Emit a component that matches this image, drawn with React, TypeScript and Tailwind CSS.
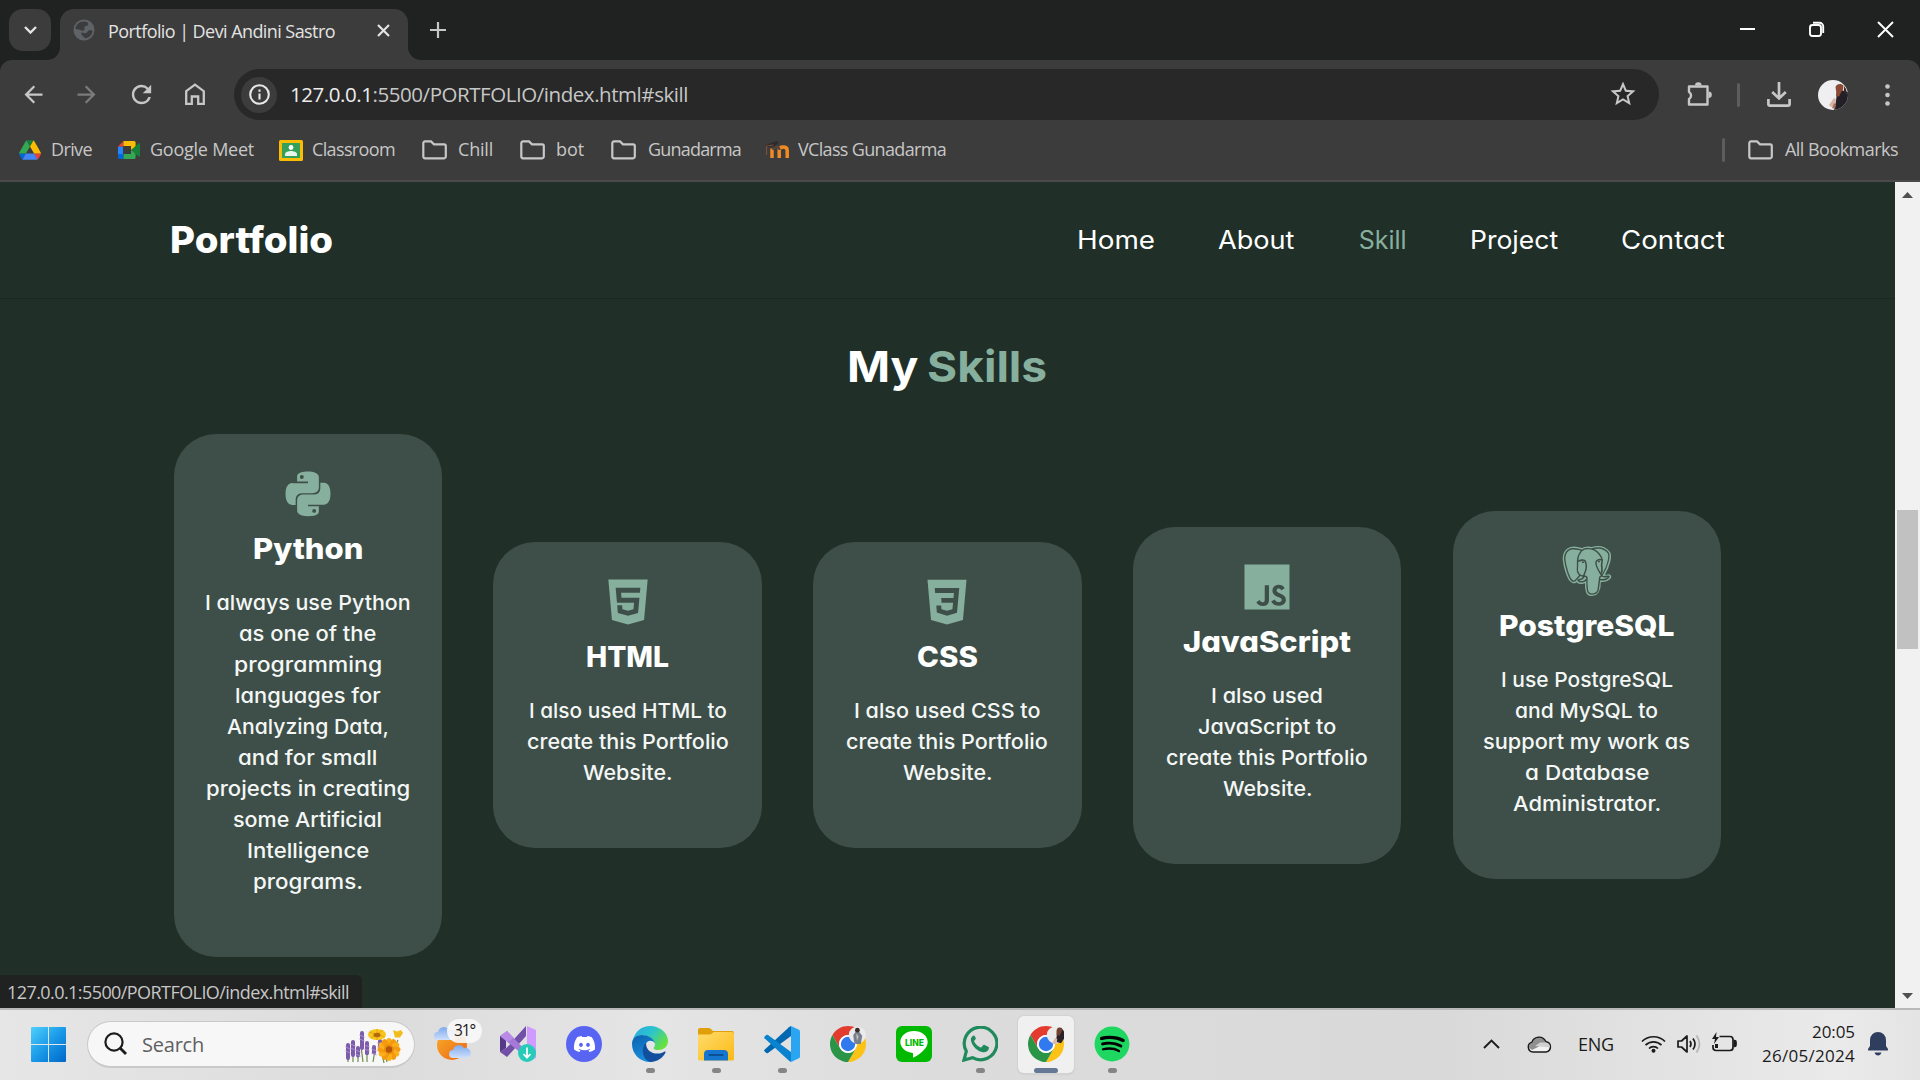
import { useLayoutEffect, useRef, useState } from "react";
import type { ReactNode } from "react";
import { MdArrowBack, MdArrowForward, MdRefresh, MdStarBorder } from "react-icons/md";
import { BiLogoPython, BiLogoHtml5, BiLogoCss3, BiLogoJavascript, BiLogoPostgresql } from "react-icons/bi";
import { FaDiscord, FaSpotify } from "react-icons/fa";

/** One line of text whose letter spacing is adjusted so that it spans `w` pixels. */
function Fit({ w, children, className = "" }: { w: number; children: ReactNode; className?: string }) {
  const ref = useRef<HTMLSpanElement>(null);
  const [spacing, setSpacing] = useState(0);
  useLayoutEffect(() => {
    const el = ref.current;
    if (!el) return;
    const count = (el.textContent ?? "").length;
    setSpacing((w - el.getBoundingClientRect().width) / Math.max(1, count));
  }, [w]);
  return (
    <span className={`block shrink-0 whitespace-nowrap ${className}`} style={{ width: w }}>
      <span ref={ref} style={{ letterSpacing: spacing }}>
        {children}
      </span>
    </span>
  );
}

/** One line of text whose glyphs are widened so that it spans `w` pixels. */
function Wide({ w, children, className = "" }: { w: number; children: ReactNode; className?: string }) {
  const ref = useRef<HTMLSpanElement>(null);
  const [scale, setScale] = useState(1);
  useLayoutEffect(() => {
    if (ref.current) setScale(w / ref.current.offsetWidth);
  }, [w]);
  return (
    <span className={`block shrink-0 whitespace-nowrap ${className}`} style={{ width: w }}>
      <span ref={ref} className="inline-block origin-left" style={{ transform: `scaleX(${scale})` }}>
        {children}
      </span>
    </span>
  );
}

function FolderOutline() {
  return (
    <svg className="h-[20px] w-[25px]" viewBox="0 0 25 20" fill="none" stroke="#c7c7c7" strokeWidth="2.2">
      <path d="M1.3 3.2a1.7 1.7 0 0 1 1.7-1.8h6l3 3h10.2a1.6 1.6 0 0 1 1.6 1.6v10.6a1.7 1.7 0 0 1-1.7 1.7H3a1.7 1.7 0 0 1-1.7-1.7z" />
    </svg>
  );
}

function DriveIcon() {
  return (
    <svg className="h-[20px] w-[22px]" viewBox="0 0 87.3 78">
      <path d="m6.6 66.85 3.85 6.65c.8 1.4 1.95 2.5 3.3 3.3l13.75-23.8h-27.5c0 1.55.4 3.1 1.2 4.5z" fill="#0066da" />
      <path d="m43.65 25-13.75-23.8c-1.35.8-2.5 1.9-3.3 3.3l-25.4 44a9.06 9.06 0 0 0-1.2 4.5h27.5z" fill="#34a853" />
      <path d="m73.55 76.8c1.35-.8 2.5-1.9 3.3-3.3l1.6-2.75 7.65-13.25c.8-1.4 1.2-2.95 1.2-4.5h-27.5l5.85 11.5z" fill="#ea4335" />
      <path d="m43.65 25 13.75-23.8c-1.35-.8-2.9-1.2-4.5-1.2h-18.5c-1.6 0-3.15.45-4.5 1.2z" fill="#188038" />
      <path d="m59.8 53h-32.3l-13.75 23.8c1.35.8 2.9 1.2 4.5 1.2h50.8c1.6 0 3.15-.45 4.5-1.2z" fill="#4285f4" />
      <path d="m73.4 26.5-12.7-22c-.8-1.4-1.95-2.5-3.3-3.3l-13.75 23.8 16.15 28h27.45c0-1.55-.4-3.1-1.2-4.5z" fill="#fbbc04" />
    </svg>
  );
}

function MeetIcon() {
  return (
    <svg className="h-[18px] w-[22px]" viewBox="0 0 22 18">
      <path d="M0 5.5h5V13H0z" fill="#2684fc" />
      <path d="M0 5.5 5.5 0v5.5z" fill="#ea4335" />
      <path d="M5.5 0H16a1.6 1.6 0 0 1 1.6 1.6V7L13 9V5H5.5z" fill="#fbbc04" />
      <path d="M0 13h5.5v5H1.6A1.6 1.6 0 0 1 0 16.4z" fill="#0066da" />
      <path d="M5.5 13H13V9l4.600 2v5.400A1.600 1.600 0 0 1 16 18H5.500z" fill="#34a853" />
      <path d="M13 9l7.500-6.400c.6-.5 1.500-.2 1.500.6v11.600c0 .8-.9 1.100-1.500.6z" fill="#188038" />
    </svg>
  );
}

function ClassroomIcon() {
  return (
    <svg className="h-[21px] w-[24px]" viewBox="0 0 24 21">
      <rect width="24" height="21" rx="1.5" fill="#fbbc04" />
      <rect x="3" y="3" width="18" height="15" fill="#34a05a" />
      <circle cx="12" cy="7.500" r="2.400" fill="#fff" />
      <path d="M6 16v-1.800c0-2 3.500-3.200 6-3.200s6 1.200 6 3.200V16z" fill="#e8f5ec" />
    </svg>
  );
}

function MoodleIcon() {
  return (
    <svg className="h-[18px] w-[24px]" viewBox="0 0 24 18" fill="none">
      <path d="M7 17V7.500M14.200 17V9.300Q14.200 6 18.200 6T22.200 9.300V17" stroke="#f08a24" strokeWidth="3.500" />
      <path d="M8 9q1-3 4-3 2.500 0 2.500 3" stroke="#5a4436" strokeWidth="2.200" />
      <path d="M0 4.500 6 2 12 0l1.500 2L9 5.500 3 6z" fill="#2f2a28" />
      <path d="M1.500 5v9M1.500 5l7-1" stroke="#75523d" strokeWidth="1.200" />
    </svg>
  );
}

const bookmarks: { label: string; w: number; icon: ReactNode; item: string; gap: string }[] = [
  { label: "Drive", w: 41, icon: <DriveIcon />, item: "ml-[19px]", gap: "ml-[10px]" },
  { label: "Google Meet", w: 104, icon: <MeetIcon />, item: "ml-[26px]", gap: "ml-[10px]" },
  { label: "Classroom", w: 83, icon: <ClassroomIcon />, item: "ml-[25px]", gap: "ml-[9px]" },
  { label: "Chill", w: 35, icon: <FolderOutline />, item: "ml-[27px]", gap: "ml-[11px]" },
  { label: "bot", w: 28, icon: <FolderOutline />, item: "ml-[27px]", gap: "ml-[11px]" },
  { label: "Gunadarma", w: 93, icon: <FolderOutline />, item: "ml-[27px]", gap: "ml-[12px]" },
  { label: "VClass Gunadarma", w: 148, icon: <MoodleIcon />, item: "ml-[24px]", gap: "ml-[9px]" },
];

function Avatar({ className }: { className: string }) {
  return (
    <svg className={className} viewBox="0 0 30 30">
      <clipPath id="avatarClip">
        <circle cx="15" cy="15" r="15" />
      </clipPath>
      <g clipPath="url(#avatarClip)">
        <rect width="30" height="30" fill="#efeff1" />
        <path d="M19 13l4-3 7 2v18H16l2-9z" fill="#221f26" />
        <path d="M17.500 7c1-3.500 6-4 8-1.500l-.5 4-2 3-2 4-3 0 .2-5z" fill="#8a4a35" />
        <path d="M11 25l5-7 2 1-1 6-4 2z" fill="#d9b3a2" />
        <path d="M14 28l2-5 2 2-1 4z" fill="#a8705c" />
        <path d="M26 6l2 3 1 5-1 1-2-4z" fill="#3b2522" />
      </g>
    </svg>
  );
}

function TabStrip() {
  return (
    <div className="flex h-[60px] items-start bg-[#202221]">
      <div className="mt-[9px] ml-[9px] flex h-[42px] w-[42px] items-center justify-center rounded-[14px] bg-[#3c3c3c]">
        <svg className="h-[8px] w-[13px]" viewBox="0 0 13 8" fill="none" stroke="#e3e3e3" strokeWidth="2.400">
          <path d="M1 1l5.500 5.500L12 1" />
        </svg>
      </div>
      <div className="mt-[9px] ml-[-4px] flex h-[51px] items-end">
        <svg className="h-[13px] w-[13px]" viewBox="0 0 13 13">
          <path d="M13 0v13H0A13 13 0 0 0 13 0z" fill="#3c3c3c" />
        </svg>
        <div className="flex h-[51px] w-[348px] items-center rounded-t-[14px] bg-[#3c3c3c] pb-[9px]">
          <svg className="ml-[13px] h-[22px] w-[22px]" viewBox="0 0 22 22">
            <circle cx="11" cy="11" r="10.500" fill="#5f6368" />
            <path d="M11 2.500c3 0 5 1.500 4 3.500-1 1.500-3 .5-3.500 2s1 2.500-1 3.500c-1.500.8-3-.5-5-1l-3-.5C2.500 6 6 2.500 11 2.500zM8 13.500c2 0 3 1 5 .5 1.500-.4 1.500-2.500 4-3l2.500.8c0 3.500-3 7.200-7.500 7.700-.5-2-3.500-2-4-6z" fill="#3c3c3c" />
          </svg>
          <Fit w={227} className="mt-[1px] ml-[13px] text-[18px] leading-[28px] text-[#e3e3e3]">
            Portfolio | Devi Andini Sastro
          </Fit>
          <svg className="ml-[42px] h-[13px] w-[13px]" viewBox="0 0 13 13" stroke="#e3e3e3" strokeWidth="2.200">
            <path d="M1 1l11 11M12 1L1 12" />
          </svg>
        </div>
        <svg className="h-[13px] w-[13px]" viewBox="0 0 13 13">
          <path d="M0 0v13h13A13 13 0 0 1 0 0z" fill="#3c3c3c" />
        </svg>
      </div>
      <svg className="mt-[22px] ml-[9px] h-[16px] w-[16px]" viewBox="0 0 16 16" stroke="#c7c7c7" strokeWidth="2.200">
        <path d="M8 0v16M0 8h16" />
      </svg>
      <div className="mt-[21px] mr-[26px] ml-auto flex items-center gap-[52px] text-white">
        <svg className="h-[17px] w-[17px]" viewBox="0 0 17 17" stroke="currentColor" strokeWidth="2">
          <path d="M1 8h15" />
        </svg>
        <svg className="h-[17px] w-[17px]" viewBox="0 0 17 17" fill="none" stroke="currentColor" strokeWidth="1.900">
          <rect x="2" y="4" width="11" height="11" rx="2.500" />
          <path d="M5 1.800h6.500a3.700 3.700 0 0 1 3.700 3.700V12" />
        </svg>
        <svg className="h-[17px] w-[17px]" viewBox="0 0 17 17" stroke="currentColor" strokeWidth="1.900">
          <path d="M1 1l15 15M16 1L1 16" />
        </svg>
      </div>
    </div>
  );
}

function Toolbar() {
  return (
    <div className="bg-[#202221]">
      <div className="flex h-[69px] items-center rounded-t-[12px] bg-[#3c3c3c] text-[#c7c7c7]">
        <MdArrowBack className="ml-[20px] h-[27px] w-[27px] shrink-0" />
        <MdArrowForward className="ml-[26px] h-[27px] w-[27px] shrink-0 text-[#7b7b7b]" />
        <MdRefresh className="ml-[27px] h-[29px] w-[29px] shrink-0" />
        <svg className="mb-[2px] ml-[29px] h-[22px] w-[20px] shrink-0" viewBox="0 0 20 22" fill="none" stroke="currentColor" strokeWidth="2.300">
          <path d="M1.200 8.200 10 1.600l8.800 6.600v12.600h-5.600v-7.300H6.800v7.300H1.200z" />
        </svg>
        <div className="ml-[29px] flex h-[51px] w-[1425px] items-center rounded-full bg-[#282828]">
          <div className="ml-[7px] flex h-[36px] w-[36px] items-center justify-center rounded-full bg-[#3c3c3c]">
            <svg className="h-[21px] w-[21px]" viewBox="0 0 21 21" fill="none" stroke="#e8e8e8" strokeWidth="2.100">
              <circle cx="10.500" cy="10.500" r="9.300" />
              <path d="M10.500 9.500v6M10.500 5.500v2.200" />
            </svg>
          </div>
          <Fit w={398} className="mb-[2px] ml-[13px] text-[20.500px] leading-[30px]">
            <span className="text-[#ececec]">127.0.0.1</span>:5500/PORTFOLIO/index.html#skill
          </Fit>
          <MdStarBorder className="mr-[21px] mb-[2px] ml-auto h-[30px] w-[30px]" />
        </div>
        <svg className="mb-[2px] ml-[27px] h-[26px] w-[26px] shrink-0" viewBox="0 0 26 26">
          <path d="M3 5.500h18.500v18H3v-5.500a4 4 0 0 0 0-7z" fill="none" stroke="currentColor" strokeWidth="2.400" strokeLinejoin="round" />
          <path d="M9 4.500a3.300 3.300 0 0 1 6.600 0zM22.500 10.500a3.300 3.300 0 0 1 0 6.600z" fill="currentColor" />
        </svg>
        <div className="ml-[25px] h-[24px] w-[3px] rounded-full bg-[#5d5d5d]" />
        <svg className="ml-[27px] h-[25px] w-[24px] shrink-0" viewBox="0 0 24 25" fill="none" stroke="currentColor" strokeWidth="2.700">
          <path d="M12 0v16M5.200 10l6.800 6.500 6.800-6.500M1.400 17v5.500q0 1.100 1.100 1.100h19q1.100 0 1.100-1.100V17" />
        </svg>
        <Avatar className="ml-[27px] h-[30px] w-[30px] shrink-0" />
        <svg className="ml-[37px] h-[22px] w-[5px] shrink-0" viewBox="0 0 5 22" fill="currentColor">
          <circle cx="2.500" cy="2.500" r="2.300" />
          <circle cx="2.500" cy="11" r="2.300" />
          <circle cx="2.500" cy="19.500" r="2.300" />
        </svg>
      </div>
    </div>
  );
}

function BookmarksBar() {
  return (
    <div className="flex h-[53px] items-center border-b-2 border-[#4a4a4a] bg-[#3c3c3c] pb-[9px] text-[18px] text-[#c7c7c7]">
      {bookmarks.map((b) => (
        <div key={b.label} className={`flex items-center ${b.item}`}>
          {b.icon}
          <Fit w={b.w} className={`mb-[2px] leading-[28px] ${b.gap}`}>
            {b.label}
          </Fit>
        </div>
      ))}
      <div className="ml-auto h-[24px] w-[3px] rounded-full bg-[#5d5d5d]" />
      <div className="mr-[22px] ml-[23px] flex items-center">
        <FolderOutline />
        <Fit w={113} className="mb-[2px] ml-[12px] leading-[28px]">
          All Bookmarks
        </Fit>
      </div>
    </div>
  );
}

const navLinks = [
  { label: "Home", w: 78, color: "text-white" },
  { label: "About", w: 77, color: "text-white" },
  { label: "Skill", w: 48, color: "text-[#87af9d]" },
  { label: "Project", w: 88, color: "text-white" },
  { label: "Contact", w: 104, color: "text-white" },
];

type Line = [text: string, width: number];

const skills: { title: string; w: number; icon: ReactNode; lines: Line[] }[] = [
  {
    title: "Python",
    w: 110,
    icon: <BiLogoPython className="h-[60px] w-[60px]" />,
    lines: [
      ["I always use Python", 206],
      ["as one of the", 137],
      ["programming", 148],
      ["languages for", 146],
      ["Analyzing Data,", 162],
      ["and for small", 139],
      ["projects in creating", 204],
      ["some Artificial", 149],
      ["Intelligence", 122],
      ["programs.", 110],
    ],
  },
  {
    title: "HTML",
    w: 83,
    icon: <BiLogoHtml5 className="h-[60px] w-[60px]" />,
    lines: [
      ["I also used HTML to", 198],
      ["create this Portfolio", 202],
      ["Website.", 89],
    ],
  },
  {
    title: "CSS",
    w: 61,
    icon: <BiLogoCss3 className="h-[60px] w-[60px]" />,
    lines: [
      ["I also used CSS to", 186],
      ["create this Portfolio", 202],
      ["Website.", 89],
    ],
  },
  {
    title: "JavaScript",
    w: 168,
    icon: <BiLogoJavascript className="h-[60px] w-[60px]" />,
    lines: [
      ["I also used", 112],
      ["JavaScript to", 138],
      ["create this Portfolio", 202],
      ["Website.", 89],
    ],
  },
  {
    title: "PostgreSQL",
    w: 176,
    icon: <BiLogoPostgresql className="h-[60px] w-[60px]" />,
    lines: [
      ["I use PostgreSQL", 172],
      ["and MySQL to", 143],
      ["support my work as", 207],
      ["a Database", 124],
      ["Administrator.", 148],
    ],
  },
];

function PortfolioPage() {
  return (
    <main className="flex-1 bg-[#202f28] font-['Inter',sans-serif] [font-feature-settings:'cv11']">
      <header className="flex h-[117px] items-center justify-between border-b border-[#1b2822] pr-[170px] pl-[170px]">
        <Wide w={163} className="text-[37px] leading-[48px] font-extrabold text-white">
          Portfolio
        </Wide>
        <nav className="flex gap-[63.200px] text-[25px] leading-[36px]">
          {navLinks.map((n) => (
            <Wide key={n.label} w={n.w} className={n.color}>
              {n.label}
            </Wide>
          ))}
        </nav>
      </header>
      <h2 className="mt-[37px] mr-[2px] flex justify-center gap-[9px] text-[43px] leading-[60px] font-bold text-white">
        <Wide w={71}>My</Wide>
        <Wide w={120} className="text-[#87af9d]">
          Skills
        </Wide>
      </h2>
      <section className="mt-[37.600px] flex items-center gap-[51.300px] pl-[173.800px]">
        {skills.map((s) => (
          <article key={s.title} className="flex w-[268.400px] flex-col items-center rounded-[42px] bg-[#3d4f48] pt-[30px] pb-[60px]">
            <div className="text-[#87af9d]">{s.icon}</div>
            <Wide w={s.w} className="mt-[3px] text-[29px] leading-[44px] font-extrabold text-white">
              {s.title}
            </Wide>
            <div className="mt-[16px] flex flex-col items-center text-[20.500px] leading-[31px] font-[450] text-[#f4f7f5]">
              {s.lines.map(([text, w]) => (
                <Wide key={text} w={w}>
                  {text}
                </Wide>
              ))}
            </div>
          </article>
        ))}
      </section>
    </main>
  );
}

function Scrollbar() {
  return (
    <div className="flex w-[25px] flex-col items-center bg-[#f1f1f1]">
      <svg className="mt-[10px] h-[6px] w-[11px]" viewBox="0 0 11 6">
        <path d="M5.500 0L11 6H0z" fill="#505050" />
      </svg>
      <div className="mt-[312px] h-[139px] w-[21px] bg-[#c1c1c1]" />
      <svg className="mt-auto mb-[9px] h-[6px] w-[11px]" viewBox="0 0 11 6">
        <path d="M5.500 6L11 0H0z" fill="#505050" />
      </svg>
    </div>
  );
}

function WindowsLogo() {
  return (
    <svg className="h-[35px] w-[35px]" viewBox="0 0 35 35">
      <linearGradient id="win" x1="0" y1="0" x2="1" y2="1" gradientUnits="objectBoundingBox">
        <stop offset="0" stopColor="#4fd0fc" />
        <stop offset=".5" stopColor="#1a9ae8" />
        <stop offset="1" stopColor="#0067c9" />
      </linearGradient>
      <path d="M1 0h16v17H0V1q0-1 1-1zM18 0h16q1 0 1 1v16H18zM0 18h17v17H1q-1 0-1-1zM18 18h17v16q0 1-1 1H18z" fill="url(#win)" />
    </svg>
  );
}

const petals = [0, 30, 60, 90, 120, 150, 180, 210, 240, 270, 300, 330];
const lavender = [
  [3, 15, 18],
  [8, 12, 18],
  [13, 18, 12],
  [17, 3, 20],
  [22, 13, 15],
  [29, 17, 10],
  [35, 11, 9],
];

function Flowers() {
  return (
    <svg className="h-[35px] w-[59px]" viewBox="0 0 59 35">
      <g stroke="#6f8a4a" strokeWidth="1.200" fill="none">
        <path d="M3 34V24M8 34V22M13 34V26M18 34L16 18M22 34V22M28 34l2-12M39 35l-3-14M42 34l-2-9M45 30l8-18" />
      </g>
      {lavender.map(([x, y, h]) => (
        <g key={x}>
          <rect x={x - 2} y={y} width="4" height={h * 0.95} rx="2" fill="#7d5cab" />
          <path d={`M${x - 2.500} ${y + 4}l5 2M${x - 2.500} ${y + 8}l5 2`} stroke="#a98bcf" strokeWidth="1" />
        </g>
      ))}
      <ellipse cx="32" cy="6.500" rx="9" ry="5.500" fill="#f7c51d" />
      <path d="M24 4l16 5M26 10l12-8M32 1v11" stroke="#e0a20e" strokeWidth=".8" />
      <ellipse cx="32" cy="7" rx="3.500" ry="2.200" fill="#b5680e" />
      <path d="M48 2l4 1.500L56 2l2 3-3 4.500h-5z" fill="#f2bd1b" />
      {petals.map((a) => (
        <ellipse key={a} cx="44" cy="14.500" rx="3" ry="4.500" fill={a % 60 ? "#f49a0e" : "#fbb01a"} transform={`rotate(${a} 44 21.500)`} />
      ))}
      <circle cx="44" cy="21.500" r="5" fill="#ee8f0c" />
      <circle cx="44" cy="21.500" r="3.200" fill="#b5560c" />
    </svg>
  );
}

function Weather() {
  return (
    <div className="relative h-[44px] w-[48px]">
      <svg className="h-[44px] w-[48px]" viewBox="0 0 48 44">
        <linearGradient id="sun" x1="0" y1="0" x2="1" y2="1">
          <stop offset="0" stopColor="#f6b02c" />
          <stop offset="1" stopColor="#ef6410" />
        </linearGradient>
        <linearGradient id="cloud" x1="0" y1="0" x2="0" y2="1">
          <stop offset="0" stopColor="#7fa9ee" />
          <stop offset="1" stopColor="#cfe0fb" />
        </linearGradient>
        <circle cx="18" cy="26" r="15" fill="url(#sun)" />
        <path d="M4 21a4 4 0 0 1 0-8 6 6 0 0 1 11-2 5 5 0 0 1 4 10z" fill="url(#cloud)" />
        <path d="M19 39a4 4 0 0 1 0-8 6 6 0 0 1 11-2 5 5 0 0 1 3 10z" fill="url(#cloud)" />
      </svg>
      <div className="absolute top-0 left-[13px] flex h-[24px] w-[35px] items-center justify-center rounded-full bg-[#f8f8f8]/90 text-[15.500px] text-[#1c1c1c]">
        <Fit w={21} className="mb-[1px] leading-[24px]">
          31°
        </Fit>
      </div>
    </div>
  );
}

function VisualStudio() {
  return (
    <svg className="h-[36px] w-[36px]" viewBox="0 0 36 36">
      <path d="M6 22l20-22v10L7 31l-7-5z" fill="#7350a8" />
      <path d="M0 10l7-5 20 21v6z" fill="#a678d8" />
      <path d="M0 10l7-5 7 7-7 4-1-1z" fill="#b98be6" />
      <path d="M0 10v16l6-4v-7z" fill="#57398a" />
      <path d="M6 15v7l4-3.500z" fill="#dfdfdf" />
      <path d="M27 0l9 4v28l-9 4z" fill="#cf9bff" />
      <circle cx="27" cy="27" r="9" fill="#27ccb8" />
      <path d="M27 21.500v10M23.500 28l3.500 3.700 3.500-3.700" stroke="#fff" strokeWidth="1.700" fill="none" />
    </svg>
  );
}

function Discord() {
  return (
    <div className="flex h-[36px] w-[36px] items-center justify-center rounded-full bg-[#5865f2]">
      <FaDiscord className="h-[24px] w-[23px] text-white" />
    </div>
  );
}

function Edge() {
  return (
    <svg className="h-[36px] w-[36px]" viewBox="0 0 36 36">
      <linearGradient id="edgeTop" x1="0" y1="0" x2="1" y2=".6">
        <stop offset="0" stopColor="#29a7e0" />
        <stop offset=".5" stopColor="#2bc3cf" />
        <stop offset="1" stopColor="#66e13f" />
      </linearGradient>
      <linearGradient id="edgeLeft" x1="0" y1="0" x2=".4" y2="1">
        <stop offset="0" stopColor="#0b62ad" />
        <stop offset="1" stopColor="#1a8ee0" />
      </linearGradient>
      <path d="M.5 15C3 5 10 0 18 0c10 0 18 7 18 15 0 6-5 9-9.500 9-4.500 0-5.500-1.500-4.500-2.700 1-1.300 1.300-2.800.5-4.800C20.500 11.500 15 9.300 9.500 9.300 5 9.300 2 12 .5 15z" fill="url(#edgeTop)" />
      <path d="M0 18c0-5.500 4-9 9.500-9 6.500 0 12 3 13.300 8-2.800-3.500-8.800-3-9.300 3-.5 9 7.500 13 13.500 11.500C24 35 20 36 18 36 8 36 0 28 0 18z" fill="url(#edgeLeft)" />
      <path d="M14 17c-5 4-4.500 16 4 19 7 0 13-4 15.500-9.500.5-1-.5-1.200-1.200-.8C25 30 14 27 14 17z" fill="#124f9c" />
    </svg>
  );
}

function Explorer() {
  return (
    <svg className="h-[36px] w-[36px]" viewBox="0 0 36 36">
      <linearGradient id="folderFace" x1="0" y1="0" x2="1" y2="1">
        <stop offset="0" stopColor="#ffdc6e" />
        <stop offset="1" stopColor="#fbb914" />
      </linearGradient>
      <path d="M0 4q0-2 2-2h9q1.500 0 2.500 1.500L15 5h19q2 0 2 2v5H0z" fill="#dfa00b" />
      <path d="M0 8.500h11q2 0 3.200-1.300T17 6h17q2 0 2 2v25q0 1.500-1.500 1.500h-33Q0 34.500 0 33z" fill="url(#folderFace)" />
      <path d="M6 34.500V28q0-4 4-4h16q4 0 4 4v6.500z" fill="#1476cf" />
      <path d="M11.500 29h13" stroke="#0b4f94" strokeWidth="2" strokeLinecap="round" />
    </svg>
  );
}

function VsCode() {
  return (
    <svg className="h-[36px] w-[36px]" viewBox="0 0 36 36">
      <path d="M27 0v10L4 27q-1 .5-1.700 0L.5 25.300q-.7-.8 0-1.500L25 1.200z" fill="#0068b0" />
      <path d="M27 36V26L4 9q-1-.5-1.700 0L.5 10.700q-.7.800 0 1.500L25 34.800z" fill="#0a83cf" />
      <path d="M27 0l8 3.700q1 .5 1 1.700v25.200q0 1.200-1 1.700L27 36z" fill="#29a5f2" />
    </svg>
  );
}

function Chrome({ active }: { active?: boolean }) {
  return (
    <svg className="h-[36px] w-[36px]" viewBox="-24 -24 48 48">
      <path d="M-20.780-12A24 24 0 0 1 20.780-12L0-12A12 12 0 0 0-10.390 6z" fill="#e33b2e" />
      <path d="M20.780-12A24 24 0 0 1 0 24L10.390 6A12 12 0 0 0 0-12z" fill="#fcc215" />
      <path d="M0 24A24 24 0 0 1-20.780-12L-10.390 6A12 12 0 0 0 10.390 6z" fill="#2a9447" />
      <circle r="12" fill="#fff" />
      <circle r="9.600" fill="#3179ee" />
      <circle cx="12.500" cy="-12" r="11.500" fill="#ebebeb" />
      {active ? (
        <>
          <path d="M13-3l2-12 5-7 4 5v10l-4 6z" fill="#29222a" />
          <path d="M14-16q0-7 5-6l3 3-4 8-4-1z" fill="#754030" />
          <path d="M8-1l4-7 3 1-1 8z" fill="#dcb9aa" />
        </>
      ) : (
        <>
          <path d="M8-3l-1-9 3-4h5l4 5-2 11h-7z" fill="#77808f" />
          <circle cx="12.500" cy="-18.500" r="3.200" fill="#3a2c2b" />
          <path d="M11-14l3 4-2 6z" fill="#d8c2b4" />
        </>
      )}
    </svg>
  );
}

function LineApp() {
  return (
    <div className="relative h-[36px] w-[36px] overflow-hidden rounded-[6px] bg-[#00b900]">
      <svg className="h-[36px] w-[36px]" viewBox="0 0 36 36">
        <path d="M18 5C10.400 5 4.300 9.900 4.300 16c0 5.400 5 10 11.500 10.800 1.500.3 1.500 1 1.200 4.200 0 .6.500.7 1.200.3C24 28 31.700 22.500 31.700 16 31.700 9.900 25.600 5 18 5z" fill="#fff" />
      </svg>
      <Fit w={19} className="absolute top-[11px] left-[9px] font-['Inter'] text-[8.500px] leading-[12px] font-extrabold text-[#00b900]">
        LINE
      </Fit>
    </div>
  );
}

function WhatsApp() {
  return (
    <svg className="h-[36px] w-[36px]" viewBox="0 0 36 36">
      <path d="M2 34l2.300-8.700A16.300 16.300 0 1 1 10.500 31.600z" fill="none" stroke="#1f8a5b" strokeWidth="3.200" />
      <path d="M12.400 9.500c-.6-.1-1.300 0-2 .8-1.200 1.200-1.900 2.700-1.400 4.700 1.500 5.800 6.500 10.300 12 11.300 2.600.4 5.300-1 5.800-3.500.2-1.200.1-1.600-.6-2l-3.600-1.800c-.7-.3-1.200-.1-1.700.5l-1.200 1.500c-.4.500-.9.500-1.600.2-2.600-1.200-4.500-3-5.800-5.400-.3-.6-.2-1 .3-1.500 1.300-1.300 1.400-1.500 1-2.600l-1.200-2.200z" fill="#1f8a5b" />
    </svg>
  );
}

function Spotify() {
  return (
    <div className="grid h-[36px] w-[36px] place-items-center">
      <div className="col-start-1 row-start-1 h-[30px] w-[30px] rounded-full bg-black" />
      <FaSpotify className="col-start-1 row-start-1 h-[36px] w-[36px] text-[#1ed760]" />
    </div>
  );
}

const apps: { name: string; icon: ReactNode; state: "none" | "running" | "active" }[] = [
  { name: "visual-studio", icon: <VisualStudio />, state: "none" },
  { name: "discord", icon: <Discord />, state: "none" },
  { name: "edge", icon: <Edge />, state: "running" },
  { name: "explorer", icon: <Explorer />, state: "running" },
  { name: "vscode", icon: <VsCode />, state: "running" },
  { name: "chrome", icon: <Chrome />, state: "none" },
  { name: "line", icon: <LineApp />, state: "none" },
  { name: "whatsapp", icon: <WhatsApp />, state: "running" },
  { name: "chrome-profile", icon: <Chrome active />, state: "active" },
  { name: "spotify", icon: <Spotify />, state: "running" },
];

const tileClass = {
  none: "",
  running: "",
  active: "bg-[#f0f0f0] shadow-[0_0_0_1px_#d3d3d3,0_1px_2px_#bbbbbb]",
};
const markClass = {
  none: "w-0",
  running: "w-[9px] bg-[#858585]",
  active: "w-[24px] bg-[#647896]",
};

function SystemTray() {
  return (
    <div className="mr-[32px] ml-auto flex h-[70px] items-center text-[#1b1b1b]">
      <svg className="h-[10px] w-[17px]" viewBox="0 0 17 10" fill="none" stroke="currentColor" strokeWidth="1.900">
        <path d="M1 9l7.500-7.500L16 9" />
      </svg>
      <svg className="ml-[27px] h-[17px] w-[25px]" viewBox="0 0 25 17">
        <path d="M6 16a5 5 0 0 1-1-9.800A7.500 7.500 0 0 1 18.800 5.700 5.200 5.200 0 0 1 19 16z" fill="#f2f2f2" stroke="#1b1b1b" strokeWidth="1.600" />
        <path d="M2 11.500a4.200 4.200 0 0 1 3.500-4.600A7 7 0 0 1 12 1.800a7 7 0 0 1 6.300 4.700L11 11l-6 3z" fill="#8f8f8f" />
        <path d="M8 10l5-3.500h5.500q4.500.5 4.500 5z" fill="#d0d0d0" />
      </svg>
      <Fit w={36} className="ml-[26px] text-[18px] leading-[28px]">
        ENG
      </Fit>
      <svg className="ml-[27px] h-[18px] w-[25px]" viewBox="0 0 25 18" fill="none" stroke="currentColor" strokeWidth="1.700">
        <path d="M1 6.500a16.300 16.300 0 0 1 23 0M4.500 10.200a11.300 11.300 0 0 1 16 0M8 13.500a6.300 6.300 0 0 1 9 0" />
        <circle cx="12.500" cy="15.800" r="2" fill="currentColor" stroke="none" />
      </svg>
      <svg className="ml-[11px] h-[20px] w-[25px]" viewBox="0 0 25 20" fill="none" stroke="currentColor" strokeWidth="1.700">
        <path d="M1 7h3.500L10 2v16l-5.500-5H1z" strokeLinejoin="round" />
        <path d="M13 7q2 3 0 6M16 4.500q4 5.500 0 11" />
        <path d="M19.500 1.500q6 8.500 0 17" stroke="#b4b4b4" />
      </svg>
      <svg className="mb-[4px] ml-[9px] h-[20px] w-[26px]" viewBox="0 0 26 20" fill="none" stroke="currentColor" strokeWidth="1.700">
        <path d="M8.500 4.500H19q3 0 3 3v8q0 3-3 3H5q-3 0-3-3V13" />
        <path d="M23.500 8.500q1.500 0 1.500 1.500v3q0 1.500-1.500 1.500z" fill="currentColor" />
        <path d="M5.500 0L1 7h3l-1 5 5-7H5z" fill="currentColor" stroke="none" />
        <path d="M5.500 12v4" strokeWidth="3" />
      </svg>
      <div className="ml-[25px] flex flex-col items-end text-[17px] leading-[24px]">
        <Fit w={43}>20:05</Fit>
        <Fit w={93}>26/05/2024</Fit>
      </div>
      <svg className="ml-[13px] h-[24px] w-[20px]" viewBox="0 0 20 24" fill="#2f3d5e">
        <path d="M10 0a8 8 0 0 1 8 8v6l2 3q.3 1.500-1 1.500H1q-1.300 0-1-1.500l2-3V8a8 8 0 0 1 8-8zM6.500 20.500h7q-1 3-3.500 3t-3.500-3z" />
      </svg>
    </div>
  );
}

function Taskbar() {
  return (
    <footer className="flex h-[72px] items-center border-t-2 border-[#b7b9b8] bg-[linear-gradient(90deg,#e6e6e6_0%,#dcdcdc_20%,#e5e5e5_34%,#dcdcdc_48%,#d9d9d9_75%,#eaeaea_96%,#e4e4e4_100%)] pb-[2px]">
      <div className="ml-[31px]">
        <WindowsLogo />
      </div>
      <div className="ml-[21px] flex h-[47px] w-[328px] items-center rounded-full border border-b-2 border-[#c9c9c9] bg-[#f7f7f7]">
        <svg className="ml-[16px] h-[23px] w-[23px]" viewBox="0 0 23 23" fill="none" stroke="#1d1d1d" strokeWidth="2.200">
          <circle cx="10" cy="10" r="8.600" />
          <path d="M16 16l6 6" strokeWidth="2.800" />
        </svg>
        <Fit w={62} className="mt-[2px] ml-[15px] text-[20px] leading-[30px] text-[#5f5f5f]">
          Search
        </Fit>
        <div className="mt-[3px] mr-[10px] ml-auto">
          <Flowers />
        </div>
      </div>
      <div className="mb-[7px] ml-[19px]">
        <Weather />
      </div>
      <div className="ml-[8px] flex gap-[10px]">
        {apps.map((a) => (
          <div key={a.name} className={`flex h-[57px] w-[56px] flex-col items-center rounded-[6px] pt-[10px] ${tileClass[a.state]}`}>
            {a.icon}
            <div className={`mt-[6px] h-[5px] rounded-full ${markClass[a.state]}`} />
          </div>
        ))}
      </div>
      <SystemTray />
    </footer>
  );
}

export default function App() {
  return (
    <div className="relative flex h-[1080px] w-[1920px] flex-col overflow-hidden bg-[#202f28] font-['Open_Sans',sans-serif]">
      <TabStrip />
      <Toolbar />
      <BookmarksBar />
      <div className="flex h-[826px] overflow-hidden">
        <PortfolioPage />
        <Scrollbar />
      </div>
      <Taskbar />
      <div className="absolute bottom-[72px] left-0 flex h-[33px] w-[362px] items-center rounded-tr-[6px] bg-[#202121] pl-[7px] text-[18px] text-[#c7c7c7]">
        <Fit w={342} className="leading-[28px]">
          127.0.0.1:5500/PORTFOLIO/index.html#skill
        </Fit>
      </div>
    </div>
  );
}
